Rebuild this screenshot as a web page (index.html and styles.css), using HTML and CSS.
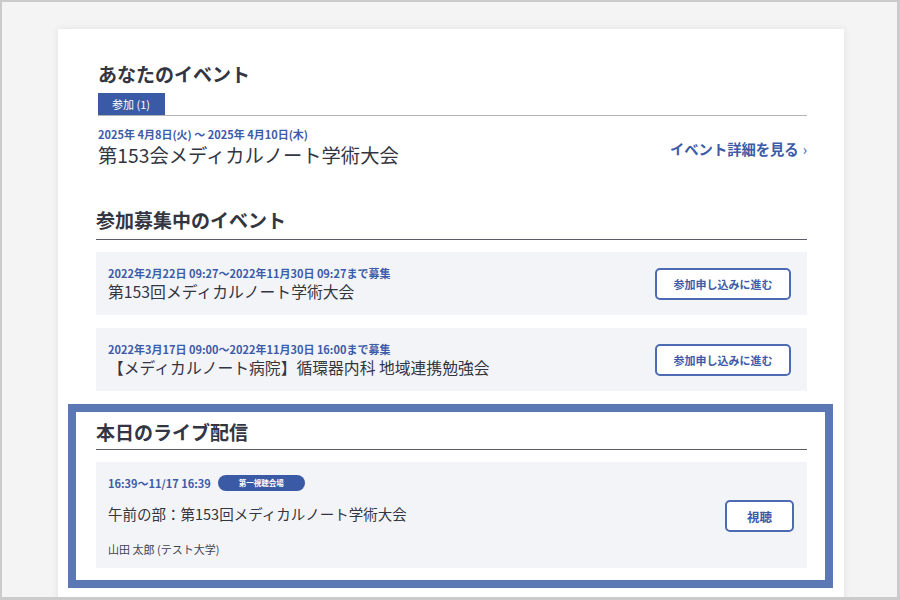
FILE: index.html
```html
<!DOCTYPE html>
<html lang="ja">
<head>
    <meta charset="UTF-8">
    <title>イベント</title>
    <link rel="stylesheet" href="styles.css">
</head>
<body>
    <div class="frame">
        <div class="panel">
            <section class="mine">
                <h2 class="heading">あなたのイベント</h2>
                <div class="tabs">
                    <span class="tab active">参加 (1)</span>
                </div>
                <div class="my-event">
                    <div>
                        <div class="date">2025年 4月8日(火) 〜 2025年 4月10日(木)</div>
                        <div class="my-title">第153会メディカルノート学術大会</div>
                    </div>
                    <a class="detail-link" href="#">イベント詳細を見る<span class="chev">›</span></a>
                </div>
            </section>

            <section class="open">
                <h2 class="heading lined">参加募集中のイベント</h2>
                <div class="event-card">
                    <div>
                        <div class="date">2022年2月22日 09:27〜2022年11月30日 09:27まで募集</div>
                        <div class="card-title">第153回メディカルノート学術大会</div>
                    </div>
                    <button class="btn apply">参加申し込みに進む</button>
                </div>
                <div class="event-card">
                    <div>
                        <div class="date">2022年3月17日 09:00〜2022年11月30日 16:00まで募集</div>
                        <div class="card-title">【メディカルノート病院】循環器内科 地域連携勉強会</div>
                    </div>
                    <button class="btn apply">参加申し込みに進む</button>
                </div>
            </section>

            <section class="live">
                <h2 class="heading lined">本日のライブ配信</h2>
                <div class="live-card">
                    <div>
                        <div class="live-time">
                            <span class="date">16:39〜11/17 16:39</span>
                            <span class="badge">第一視聴会場</span>
                        </div>
                        <div class="live-title">午前の部：第153回メディカルノート学術大会</div>
                        <div class="speaker">山田 太郎 (テスト大学)</div>
                    </div>
                    <button class="btn watch">視聴</button>
                </div>
            </section>
        </div>
    </div>
</body>
</html>
```

FILE: styles.css
```css
html, body {
    margin: 0;
    padding: 0;
}
body {
    font-family: "Noto Sans CJK JP", "Noto Sans", sans-serif;
    color: #333642;
}
.frame {
    width: 900px;
    height: 600px;
    box-sizing: border-box;
    border: 2px solid #cbcbcb;
    border-right-width: 3px;
    border-bottom-width: 3px;
    background: #f4f4f4;
    padding: 27px 0 0 56px;
    overflow: hidden;
}
.panel {
    width: 786px;
    min-height: 600px;
    box-sizing: border-box;
    background: #fff;
    padding: 32px 37px 0 38px;
    box-shadow: 0 0 8px rgba(0, 0, 0, 0.08);
}
.mine {
    padding-left: 2px;
}
.heading {
    margin: 0;
    font-size: 19px;
    line-height: 26px;
    font-weight: 700;
    color: #333642;
}
.heading.lined {
    padding-bottom: 6px;
    border-bottom: 1px solid #5a5c6c;
}
.tabs {
    margin-top: 6px;
    display: flex;
    border-bottom: 1px solid #b4b4b8;
}
.tab {
    display: inline-block;
    width: 67px;
    height: 22px;
    line-height: 22px;
    font-size: 11px;
    color: #fff;
    background: #3b5aa6;
    box-sizing: border-box;
    padding-left: 14px;
}
.my-event {
    margin-top: 11px;
    display: flex;
    justify-content: space-between;
    align-items: center;
}
.date {
    font-size: 11px;
    line-height: 14px;
    font-weight: 700;
    color: #3d5ba8;
}
.my-title {
    font-size: 19.3px;
    line-height: 28px;
    color: #333642;
}
.detail-link {
    font-size: 14.3px;
    font-weight: 700;
    color: #3d5ba8;
    text-decoration: none;
    margin-top: 1px;
}
.chev {
    margin-left: 4px;
    font-weight: 400;
}
.open {
    margin-top: 38px;
}
.event-card {
    margin-top: 12px;
    height: 63px;
    box-sizing: border-box;
    background: #f3f4f7;
    padding: 0 16px 0 12px;
    display: flex;
    justify-content: space-between;
    align-items: center;
}
.event-card .date {
    line-height: 16px;
}
.event-card + .event-card {
    margin-top: 13px;
}
.card-title {
    font-size: 15.8px;
    line-height: 22px;
    color: #333642;
}
.btn {
    font-family: inherit;
    background: #fff;
    border: 2px solid #4d6bb3;
    border-radius: 5px;
    color: #3d5ba8;
    font-size: 11px;
    font-weight: 700;
    height: 32px;
    cursor: pointer;
}
.apply {
    width: 136px;
}
.watch {
    width: 69px;
    font-size: 12.5px;
}
.live {
    margin: 13px -26px 0 -28px;
    border: 8px solid #5b78b5;
    padding: 7px 18px 12px 20px;
}
.live .heading.lined {
    padding-bottom: 4px;
}
.live-card {
    margin-top: 12px;
    background: #f3f4f7;
    padding: 13px 13px 11px 12px;
    display: flex;
    justify-content: space-between;
    align-items: center;
}
.live-time {
    display: flex;
    align-items: center;
    height: 16px;
}
.badge {
    margin-left: 7px;
    width: 87px;
    height: 16px;
    border-radius: 8px;
    background: #3b5aa6;
    color: #fff;
    font-size: 7.5px;
    font-weight: 700;
    line-height: 16px;
    text-align: center;
}
.live-title {
    margin-top: 12px;
    font-size: 14.5px;
    line-height: 22px;
    color: #333642;
}
.speaker {
    margin-top: 16px;
    font-size: 11px;
    line-height: 16px;
    color: #40434f;
}
```
